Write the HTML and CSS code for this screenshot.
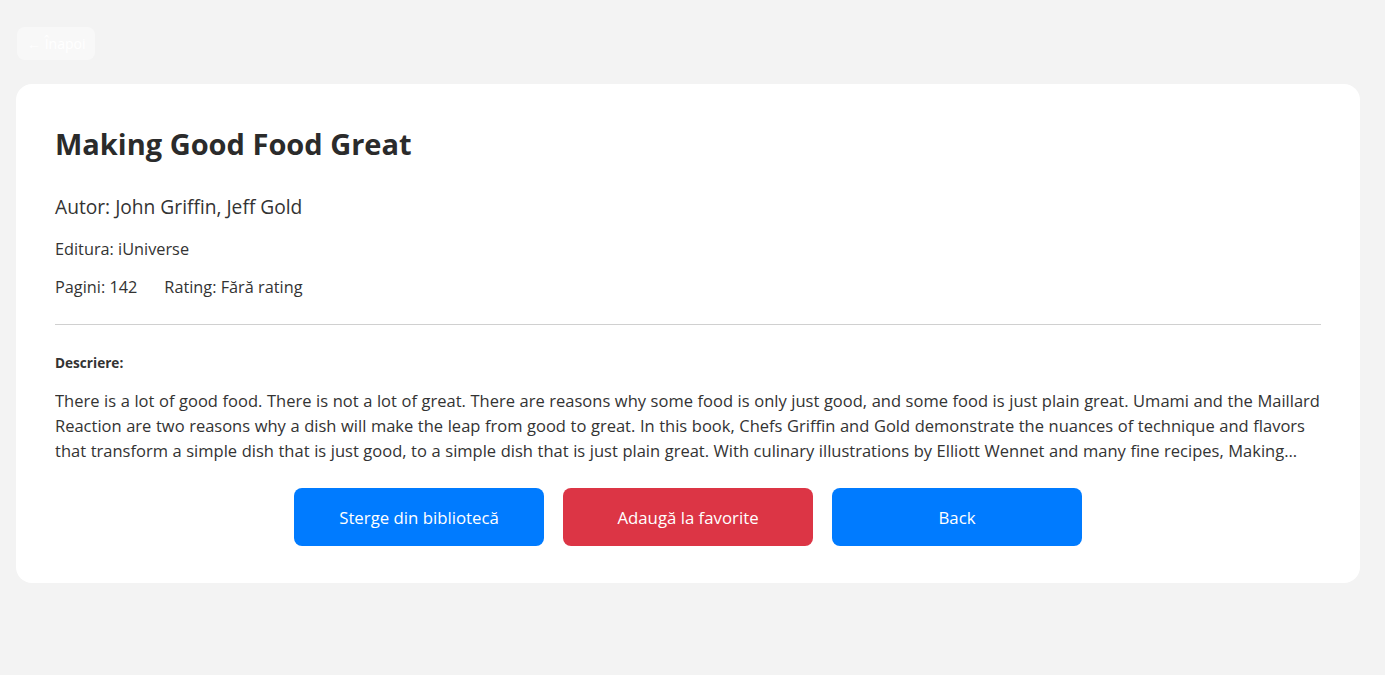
FILE: index.html
```html
<!DOCTYPE html>
<html lang="ro">
<head>
<meta charset="utf-8">
<title>Making Good Food Great</title>
<link rel="stylesheet" href="styles.css">
</head>
<body>
<div class="page">
  <div class="topbar">
    <button class="back-link">← Înapoi</button>
  </div>
  <div class="card">
    <h1 class="title">Making Good Food Great</h1>
    <p class="author">Autor: John Griffin, Jeff Gold</p>
    <p class="meta">Editura: iUniverse</p>
    <p class="meta meta-row"><span class="pages">Pagini: 142</span><span>Rating: Fără rating</span></p>
    <hr class="divider">
    <p class="desc-label">Descriere:</p>
    <p class="desc">There is a lot of good food. There is not a lot of great. There are reasons why some food is only just good, and some food is just plain great. Umami and the Maillard Reaction are two reasons why a dish will make the leap from good to great. In this book, Chefs Griffin and Gold demonstrate the nuances of technique and flavors that transform a simple dish that is just good, to a simple dish that is just plain great. With culinary illustrations by Elliott Wennet and many fine recipes, Making Good Food Great will teach you how to take your cooking to the next level and understand why great food is great.</p>
    <div class="actions">
      <button class="btn btn-blue">Sterge din bibliotecă</button>
      <button class="btn btn-red">Adaugă la favorite</button>
      <button class="btn btn-blue">Back</button>
    </div>
  </div>
</div>
</body>
</html>
```

FILE: styles.css
```css
html, body {
  margin: 0;
  padding: 0;
  background: #f3f3f3;
}
body {
  font-family: "Open Sans", "Noto Sans", sans-serif;
  color: #333;
}
.page {
  padding: 27px 25px 40px 16px;
}
.topbar {
  display: flex;
  margin-bottom: 24px;
}
.back-link {
  font-family: inherit;
  font-size: 14px;
  color: #fff;
  background: rgba(255, 255, 255, 0.45);
  border: none;
  border-radius: 8px;
  height: 33px;
  padding: 0 10px;
  margin-left: 1px;
  cursor: pointer;
}
.card {
  background: #fff;
  border-radius: 16px;
  padding: 42px 39px 37px 39px;
}
.title {
  margin: 0;
  font-size: 29px;
  line-height: 36px;
  font-weight: 700;
  color: #2b2b2b;
}
.author {
  margin: 31px 0 0;
  font-size: 19.2px;
  line-height: 28px;
}
.meta {
  margin: 16px 0 0;
  font-size: 16.3px;
  line-height: 24px;
}
.meta + .meta {
  margin-top: 14px;
}
.meta-row {
  display: flex;
}
.pages {
  margin-right: 27px;
}
.divider {
  border: none;
  border-top: 1px solid #d0d0d0;
  margin: 25px 0 0;
}
.desc-label {
  margin: 28px 0 0;
  font-size: 13.6px;
  line-height: 20px;
  font-weight: 700;
}
.desc {
  margin: 15px 0 0;
  font-size: 16.5px;
  line-height: 25px;
  word-spacing: 0.3px;
  display: -webkit-box;
  -webkit-line-clamp: 3;
  -webkit-box-orient: vertical;
  overflow: hidden;
}
.actions {
  display: flex;
  justify-content: center;
  gap: 19px;
  margin-top: 25px;
}
.btn {
  width: 250px;
  height: 58px;
  border: none;
  border-radius: 8px;
  color: #fff;
  font-family: inherit;
  font-size: 16.8px;
  cursor: pointer;
}
.btn-blue {
  background: #007bff;
}
.btn-red {
  background: #dc3545;
}
```
